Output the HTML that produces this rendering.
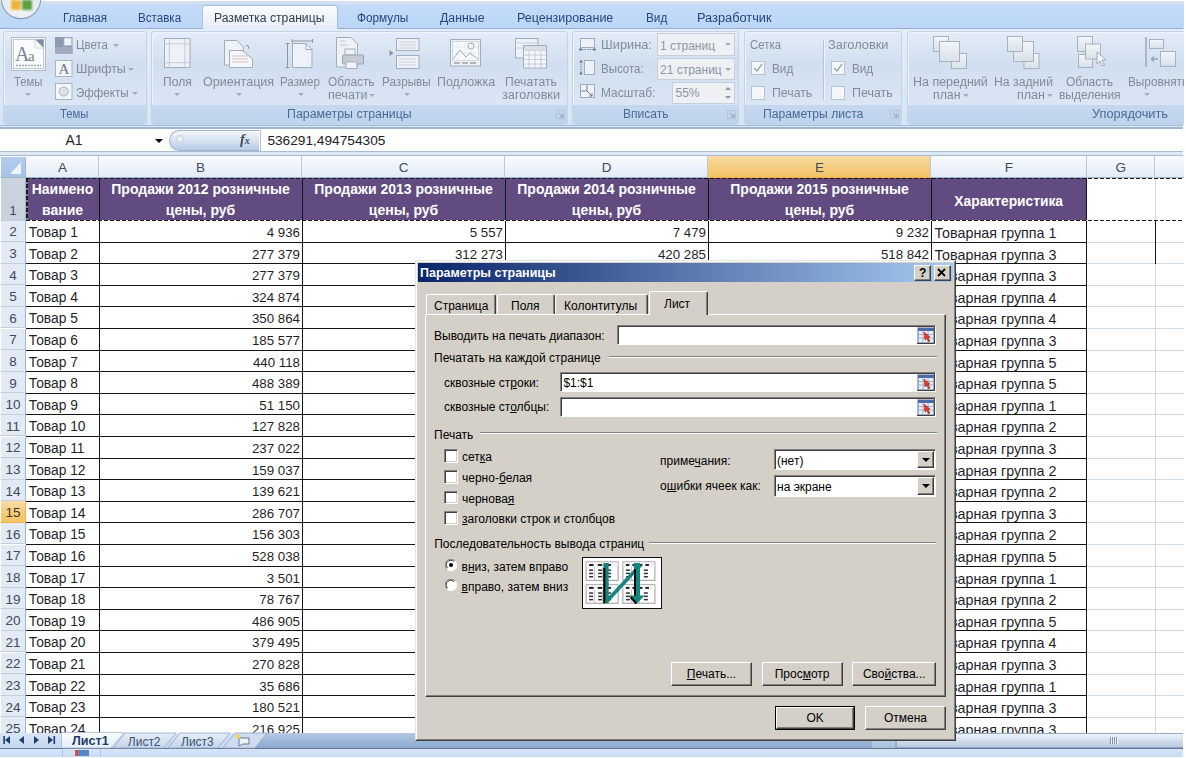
<!DOCTYPE html><html><head><meta charset="utf-8"><style>
*{margin:0;padding:0;box-sizing:border-box}
html,body{width:1186px;height:758px;overflow:hidden;background:#fff;font-family:"Liberation Sans",sans-serif}
.ab{position:absolute}
.t{position:absolute;white-space:pre;line-height:1}
</style></head><body>
<div class="ab" style="left:0;top:0;width:1186px;height:29px;background:linear-gradient(#fff 0,#fff 1px,#d3e0ef 1px,#d3e0ef 4px,#c4dcf9 4px,#bcd6f7 28px)"></div>
<div class="ab" style="left:0;top:28px;width:1183px;height:1px;background:#94acd0"></div>
<div class="ab" style="left:2px;top:-20px;width:38px;height:38px;border-radius:50%;background:radial-gradient(circle at 50% 70%,#f7f9fc 0,#e4eaf1 55%,#b9c3cf 100%);box-shadow:0 0 0 1.2px #8e9aaa"></div>
<div class="ab" style="left:11px;top:0px;width:9.5px;height:10px;background:#eeb43a;border-radius:1px;filter:blur(0.8px)"></div>
<div class="ab" style="left:21.5px;top:0px;width:10px;height:10px;background:#5aa043;border-radius:1px;filter:blur(0.8px)"></div>
<div class="ab" style="left:202px;top:5px;width:136px;height:24px;border:1px solid #a9c1e0;border-bottom:none;border-radius:3px 3px 0 0;background:linear-gradient(#fbfdff,#e4ecf7)"></div>
<div class="t" style="left:62.9px;top:11.6px;font-size:12px;color:#24477e;transform-origin:0 0;transform:scaleX(0.963)">Главная</div>
<div class="t" style="left:137.7px;top:11.6px;font-size:12px;color:#24477e;transform-origin:0 0;transform:scaleX(0.966)">Вставка</div>
<div class="t" style="left:213.5px;top:11.6px;font-size:12px;color:#333c4a;transform-origin:0 0;transform:scaleX(1.014)">Разметка страницы</div>
<div class="t" style="left:356.7px;top:11.6px;font-size:12px;color:#24477e;transform-origin:0 0;transform:scaleX(0.982)">Формулы</div>
<div class="t" style="left:440.4px;top:11.6px;font-size:12px;color:#24477e;transform-origin:0 0;transform:scaleX(1.027)">Данные</div>
<div class="t" style="left:516.7px;top:11.6px;font-size:12px;color:#24477e;transform-origin:0 0;transform:scaleX(1.039)">Рецензирование</div>
<div class="t" style="left:645.6px;top:11.6px;font-size:12px;color:#24477e;transform-origin:0 0;transform:scaleX(0.981)">Вид</div>
<div class="t" style="left:697.4px;top:11.6px;font-size:12px;color:#24477e;transform-origin:0 0;transform:scaleX(1.066)">Разработчик</div>
<div class="ab" style="left:0;top:29px;width:1183px;height:99px;background:linear-gradient(#e4eef9,#dbe8f6 60%,#d6e5f5)"></div>
<div class="ab" style="left:0;top:125px;width:1183px;height:1px;background:#a8bdd8"></div>
<div class="ab" style="left:0;top:127px;width:1183px;height:2px;background:#9fb5d2"></div>
<div class="ab" style="left:2.8px;top:30.5px;width:143.79999999999998px;height:94px;border:1px solid #c3d3e6;border-radius:3px;box-shadow:inset 1px 1px 0 #eef4fb;background:linear-gradient(#e4edf8 0,#dbe6f4 15%,#d0dff0 35%,#d8e4f3 70%,#dce7f5 80%)"></div>
<div class="ab" style="left:3.8px;top:105px;width:141.79999999999998px;height:18.5px;background:linear-gradient(#c5d8ef,#bed3ec);border-radius:0 0 3px 3px"></div>
<div class="ab" style="left:150.8px;top:30.5px;width:416.99999999999994px;height:94px;border:1px solid #c3d3e6;border-radius:3px;box-shadow:inset 1px 1px 0 #eef4fb;background:linear-gradient(#e4edf8 0,#dbe6f4 15%,#d0dff0 35%,#d8e4f3 70%,#dce7f5 80%)"></div>
<div class="ab" style="left:151.8px;top:105px;width:414.99999999999994px;height:18.5px;background:linear-gradient(#c5d8ef,#bed3ec);border-radius:0 0 3px 3px"></div>
<div class="ab" style="left:572.3px;top:30.5px;width:166.70000000000005px;height:94px;border:1px solid #c3d3e6;border-radius:3px;box-shadow:inset 1px 1px 0 #eef4fb;background:linear-gradient(#e4edf8 0,#dbe6f4 15%,#d0dff0 35%,#d8e4f3 70%,#dce7f5 80%)"></div>
<div class="ab" style="left:573.3px;top:105px;width:164.70000000000005px;height:18.5px;background:linear-gradient(#c5d8ef,#bed3ec);border-radius:0 0 3px 3px"></div>
<div class="ab" style="left:743.9px;top:30.5px;width:158.5px;height:94px;border:1px solid #c3d3e6;border-radius:3px;box-shadow:inset 1px 1px 0 #eef4fb;background:linear-gradient(#e4edf8 0,#dbe6f4 15%,#d0dff0 35%,#d8e4f3 70%,#dce7f5 80%)"></div>
<div class="ab" style="left:744.9px;top:105px;width:156.5px;height:18.5px;background:linear-gradient(#c5d8ef,#bed3ec);border-radius:0 0 3px 3px"></div>
<div class="ab" style="left:907.2px;top:30.5px;width:292.79999999999995px;height:94px;border:1px solid #c3d3e6;border-radius:3px;box-shadow:inset 1px 1px 0 #eef4fb;background:linear-gradient(#e4edf8 0,#dbe6f4 15%,#d0dff0 35%,#d8e4f3 70%,#dce7f5 80%)"></div>
<div class="ab" style="left:908.2px;top:105px;width:290.79999999999995px;height:18.5px;background:linear-gradient(#c5d8ef,#bed3ec);border-radius:0 0 3px 3px"></div>
<div class="t" style="left:13.9px;top:75.84px;font-size:12px;color:#828b97;transform-origin:0 0;transform:scaleX(0.937)">Темы</div>
<div class="ab" style="left:25px;top:93px;width:0;height:0;border-left:3px solid transparent;border-right:3px solid transparent;border-top:3px solid #a3adb8"></div>
<div class="t" style="left:75.5px;top:39.34px;font-size:12px;color:#828b97;transform-origin:0 0;transform:scaleX(0.951)">Цвета</div>
<div class="ab" style="left:113px;top:44px;width:0;height:0;border-left:3px solid transparent;border-right:3px solid transparent;border-top:3px solid #a3adb8"></div>
<div class="t" style="left:75.5px;top:63.34px;font-size:12px;color:#828b97;transform-origin:0 0;transform:scaleX(1.035)">Шрифты</div>
<div class="ab" style="left:128px;top:68px;width:0;height:0;border-left:3px solid transparent;border-right:3px solid transparent;border-top:3px solid #a3adb8"></div>
<div class="t" style="left:75.5px;top:87.14px;font-size:12px;color:#828b97;transform-origin:0 0;transform:scaleX(0.964)">Эффекты</div>
<div class="ab" style="left:132px;top:92px;width:0;height:0;border-left:3px solid transparent;border-right:3px solid transparent;border-top:3px solid #a3adb8"></div>
<div class="t" style="left:162.6px;top:75.84px;font-size:12px;color:#828b97;transform-origin:0 0;transform:scaleX(1.009)">Поля</div>
<div class="ab" style="left:174px;top:93px;width:0;height:0;border-left:3px solid transparent;border-right:3px solid transparent;border-top:3px solid #a3adb8"></div>
<div class="t" style="left:202.9px;top:75.84px;font-size:12px;color:#828b97;transform-origin:0 0;transform:scaleX(1.044)">Ориентация</div>
<div class="ab" style="left:235.5px;top:93px;width:0;height:0;border-left:3px solid transparent;border-right:3px solid transparent;border-top:3px solid #a3adb8"></div>
<div class="t" style="left:280.4px;top:75.84px;font-size:12px;color:#828b97;transform-origin:0 0;transform:scaleX(0.967)">Размер</div>
<div class="ab" style="left:297.5px;top:93px;width:0;height:0;border-left:3px solid transparent;border-right:3px solid transparent;border-top:3px solid #a3adb8"></div>
<div class="t" style="left:328.3px;top:75.84px;font-size:12px;color:#828b97;transform-origin:0 0;transform:scaleX(0.987)">Область</div>
<div class="t" style="left:327.7px;top:89.44px;font-size:12px;color:#828b97;transform-origin:0 0;transform:scaleX(1.047)">печати</div>
<div class="ab" style="left:369px;top:94px;width:0;height:0;border-left:3px solid transparent;border-right:3px solid transparent;border-top:3px solid #a3adb8"></div>
<div class="t" style="left:382px;top:75.84px;font-size:12px;color:#828b97;transform-origin:0 0;transform:scaleX(0.975)">Разрывы</div>
<div class="ab" style="left:403.5px;top:93px;width:0;height:0;border-left:3px solid transparent;border-right:3px solid transparent;border-top:3px solid #a3adb8"></div>
<div class="t" style="left:437.3px;top:75.84px;font-size:12px;color:#828b97;transform-origin:0 0;transform:scaleX(1.039)">Подложка</div>
<div class="t" style="left:505px;top:75.84px;font-size:12px;color:#828b97;transform-origin:0 0;transform:scaleX(1.014)">Печатать</div>
<div class="t" style="left:502px;top:89.44px;font-size:12px;color:#828b97;transform-origin:0 0;transform:scaleX(1.058)">заголовки</div>
<div class="t" style="left:601.4px;top:39.34px;font-size:12px;color:#828b97;transform-origin:0 0;transform:scaleX(1.067)">Ширина:</div>
<div class="t" style="left:601.4px;top:62.84px;font-size:12px;color:#828b97;transform-origin:0 0;transform:scaleX(0.959)">Высота:</div>
<div class="t" style="left:601.4px;top:86.84px;font-size:12px;color:#828b97;transform-origin:0 0;transform:scaleX(0.993)">Масштаб:</div>
<div class="t" style="left:749.7px;top:39.34px;font-size:12px;color:#828b97;transform-origin:0 0;transform:scaleX(0.953)">Сетка</div>
<div class="t" style="left:772px;top:63.34px;font-size:12px;color:#828b97;transform-origin:0 0;transform:scaleX(0.981)">Вид</div>
<div class="t" style="left:772px;top:87.34px;font-size:12px;color:#828b97;transform-origin:0 0;transform:scaleX(1.023)">Печать</div>
<div class="t" style="left:828.2px;top:39.34px;font-size:12px;color:#828b97;transform-origin:0 0;transform:scaleX(1.069)">Заголовки</div>
<div class="t" style="left:851.5px;top:63.34px;font-size:12px;color:#828b97;transform-origin:0 0;transform:scaleX(0.977)">Вид</div>
<div class="t" style="left:851.5px;top:87.34px;font-size:12px;color:#828b97;transform-origin:0 0;transform:scaleX(1.035)">Печать</div>
<div class="t" style="left:913.3px;top:75.84px;font-size:12px;color:#828b97;transform-origin:0 0;transform:scaleX(1.038)">На передний</div>
<div class="t" style="left:932.5px;top:89.44px;font-size:12px;color:#828b97;transform-origin:0 0;transform:scaleX(1.026)">план</div>
<div class="ab" style="left:963px;top:94px;width:0;height:0;border-left:3px solid transparent;border-right:3px solid transparent;border-top:3px solid #a3adb8"></div>
<div class="t" style="left:994px;top:75.84px;font-size:12px;color:#828b97;transform-origin:0 0;transform:scaleX(1.019)">На задний</div>
<div class="t" style="left:1017px;top:89.44px;font-size:12px;color:#828b97;transform-origin:0 0;transform:scaleX(1.045)">план</div>
<div class="ab" style="left:1047px;top:94px;width:0;height:0;border-left:3px solid transparent;border-right:3px solid transparent;border-top:3px solid #a3adb8"></div>
<div class="t" style="left:1066.4px;top:75.84px;font-size:12px;color:#828b97;transform-origin:0 0;transform:scaleX(0.998)">Область</div>
<div class="t" style="left:1059px;top:89.44px;font-size:12px;color:#828b97;transform-origin:0 0;transform:scaleX(0.997)">выделения</div>
<div class="t" style="left:1127.9px;top:75.84px;font-size:12px;color:#828b97;transform-origin:0 0;transform:scaleX(0.982)">Выровнять</div>
<div class="ab" style="left:1144px;top:93px;width:0;height:0;border-left:3px solid transparent;border-right:3px solid transparent;border-top:3px solid #a3adb8"></div>
<div class="t" style="left:60.2px;top:108.04px;font-size:12px;color:#4a6a9a;transform-origin:0 0;transform:scaleX(0.940)">Темы</div>
<div class="t" style="left:286.7px;top:108.04px;font-size:12px;color:#4a6a9a;transform-origin:0 0;transform:scaleX(1.031)">Параметры страницы</div>
<div class="t" style="left:623.2px;top:108.04px;font-size:12px;color:#4a6a9a;transform-origin:0 0;transform:scaleX(1.005)">Вписать</div>
<div class="t" style="left:762.8px;top:108.04px;font-size:12px;color:#4a6a9a;transform-origin:0 0;transform:scaleX(1.013)">Параметры листа</div>
<div class="t" style="left:1091.7px;top:108.04px;font-size:12px;color:#4a6a9a;transform-origin:0 0;transform:scaleX(1.064)">Упорядочить</div>
<div class="ab" style="left:1183.5px;top:0;width:3px;height:758px;background:#fff;z-index:50"></div>
<defs></defs>
<svg class="ab" style="left:11px;top:36.8px;overflow:visible" width="35" height="34" viewBox="0 0 35 34"><rect x="0.5" y="0.5" width="34" height="33" fill="#f4f6f9" stroke="#b4bcc6"/><rect x="2.5" y="2.5" width="30" height="29" fill="#fbfcfd" stroke="#c2c8d0"/><path d="M24 2.5H32.5V11Z" fill="#7f8fa6"/><path d="M24 2.5V11H32.5" fill="#fff" stroke="#b4bcc6" stroke-width="0.6"/><text x="4" y="24" font-family="Liberation Serif" font-size="20" fill="#7b8390">A</text><text x="17" y="24" font-family="Liberation Serif" font-size="15" fill="#7b8390">a</text><path d="M5 28.5H30" stroke="#9aa3ae" stroke-width="1.5" stroke-dasharray="2 1"/></svg>
<svg class="ab" style="left:54.7px;top:36.8px;overflow:visible" width="17.5" height="17" viewBox="0 0 17.5 17"><rect x="0" y="0" width="17.5" height="17" fill="#8c9bb0"/><rect x="9" y="1" width="7.5" height="7.5" fill="#eef2f7" stroke="#b8c2ce" stroke-width="0.8"/><rect x="0" y="10" width="17.5" height="7" fill="#a1aec0"/></svg>
<svg class="ab" style="left:54.7px;top:59.5px;overflow:visible" width="17.5" height="17" viewBox="0 0 17.5 17"><rect x="0.5" y="0.5" width="16.5" height="16" fill="#f2f5f9" stroke="#aab3be"/><text x="3.5" y="14" font-family="Liberation Serif" font-size="15" fill="#6f7884">A</text></svg>
<svg class="ab" style="left:54.7px;top:83px;overflow:visible" width="17.5" height="17" viewBox="0 0 17.5 17"><rect x="0.5" y="0.5" width="16.5" height="16" fill="#f2f5f9" stroke="#aab3be"/><circle cx="8.75" cy="8.5" r="4.5" fill="#dde3ea" stroke="#a9b2bd"/></svg>
<svg class="ab" style="left:164.4px;top:37.9px;overflow:visible" width="26.5" height="30" viewBox="0 0 26.5 30"><rect x="0.5" y="0.5" width="25.5" height="29" fill="#eef2f8" stroke="#a3adba"/><path d="M5.3 0.5V29.5M20.8 0.5V29.5M0.5 5.8H26M0.5 24.7H26" stroke="#b9c2cd" stroke-width="0.8"/></svg>
<svg class="ab" style="left:224px;top:39.5px;overflow:visible" width="30" height="29" viewBox="0 0 30 29"><path d="M0.5 0.5H13L19.5 7V25H0.5Z" fill="#eef2f8" stroke="#a3adba"/><path d="M5.5 10.5H18.5L28.5 19V27.5H5.5Z" fill="#f5f7fa" stroke="#a3adba"/><path d="M8 16H24M8 19H24M8 22H24" stroke="#c8a8a8" stroke-width="0.7"/><path d="M22 5Q25 5 25 9" stroke="#8993a0" fill="none"/></svg>
<svg class="ab" style="left:285px;top:39.5px;overflow:visible" width="29" height="29" viewBox="0 0 29 29"><path d="M2.5 3V27.5M0.5 3.5H4.5M0.5 27.5H4.5" stroke="#8d97a3"/><path d="M7 1H27.5M7 -1V3M27.5 -1V3" stroke="#8d97a3"/><path d="M7.5 3.5H21L27 9.5V27.5H7.5Z" fill="#eef2f8" stroke="#a3adba"/><path d="M21 3.5V9.5H27" fill="none" stroke="#a3adba"/></svg>
<svg class="ab" style="left:336.4px;top:37.2px;overflow:visible" width="28" height="32.5" viewBox="0 0 28 32.5"><path d="M0.5 0.5H15L21.5 7V30H0.5Z" fill="#eef2f8" stroke="#a3adba"/><path d="M4 4H10M4 8H12" stroke="#c3cad3"/><rect x="9" y="12" width="10" height="6" fill="#eef1f5" stroke="#a3adba"/><rect x="6.5" y="18" width="21" height="9" rx="1" fill="#c5ccd6" stroke="#98a2ae"/><rect x="10" y="25" width="11" height="6.5" fill="#f2f4f7" stroke="#a3adba"/></svg>
<svg class="ab" style="left:389px;top:38px;overflow:visible" width="31" height="32" viewBox="0 0 31 32"><rect x="7.5" y="0.5" width="22.5" height="12" fill="#eef2f8" stroke="#a3adba"/><path d="M10 4H27M10 7H27M10 10H27" stroke="#c3cad3" stroke-width="0.8"/><rect x="7.5" y="17.5" width="22.5" height="13" fill="#eef2f8" stroke="#a3adba"/><path d="M10 21H27M10 24H27M10 27H27" stroke="#c3cad3" stroke-width="0.8"/><path d="M0.5 12L4.5 15L0.5 18Z" fill="#8a94a0"/></svg>
<svg class="ab" style="left:449.5px;top:39px;overflow:visible" width="31" height="28" viewBox="0 0 31 28"><rect x="0.5" y="0.5" width="30" height="26.5" fill="#eef2f7" stroke="#a3adba"/><rect x="2.5" y="2.5" width="26" height="19" fill="#f7f9fb" stroke="#c4cbd4" stroke-width="0.7"/><path d="M2.5 8H28.5M2.5 14H28.5M8 2.5V21.5M15 2.5V21.5M22 2.5V21.5" stroke="#dfe4ea" stroke-width="0.6"/><circle cx="21" cy="7" r="3" fill="none" stroke="#a3adba"/><path d="M3 20L10 11L16 18L20 14L28 20" fill="none" stroke="#a3adba"/><path d="M4 24H10M12 24H18M20 24H26" stroke="#9aa3ae" stroke-width="1.5"/></svg>
<svg class="ab" style="left:514.5px;top:38px;overflow:visible" width="32" height="31" viewBox="0 0 32 31"><rect x="0.5" y="0.5" width="22.5" height="19.5" fill="#eef2f8" stroke="#a3adba"/><path d="M0.5 5H23M0.5 10H23" stroke="#b9c2cd" stroke-width="0.8"/><rect x="8.5" y="7.5" width="23" height="22.5" fill="#f5f7fa" stroke="#a3adba"/><path d="M8.5 12.5H31.5M8.5 17H31.5M8.5 21.5H31.5M8.5 26H31.5M14 12.5V30M20 12.5V30M26 12.5V30" stroke="#b9c2cd" stroke-width="0.8"/><rect x="9" y="8" width="22" height="4.5" fill="#d7dee8"/></svg>
<svg class="ab" style="left:556px;top:110px;overflow:visible" width="9" height="9" viewBox="0 0 9 9"><rect x="0.5" y="0.5" width="8" height="8" fill="none" stroke="#b5c3d4"/><path d="M3 3L7 7M7 4V7H4" stroke="#8fa0b5" fill="none"/></svg>
<svg class="ab" style="left:727px;top:110px;overflow:visible" width="9" height="9" viewBox="0 0 9 9"><rect x="0.5" y="0.5" width="8" height="8" fill="none" stroke="#b5c3d4"/><path d="M3 3L7 7M7 4V7H4" stroke="#8fa0b5" fill="none"/></svg>
<svg class="ab" style="left:890px;top:110px;overflow:visible" width="9" height="9" viewBox="0 0 9 9"><rect x="0.5" y="0.5" width="8" height="8" fill="none" stroke="#b5c3d4"/><path d="M3 3L7 7M7 4V7H4" stroke="#8fa0b5" fill="none"/></svg>
<svg class="ab" style="left:578.9px;top:38.3px;overflow:visible" width="17" height="13.5" viewBox="0 0 17 13.5"><rect x="1.5" y="0.5" width="14" height="9" fill="#eef2f7" stroke="#a3adba"/><path d="M0.5 11.5H16.5" stroke="#7e8896" stroke-dasharray="1.5 1"/><circle cx="1.5" cy="11.5" r="1.3" fill="#6e7885"/><circle cx="15.5" cy="11.5" r="1.3" fill="#6e7885"/></svg>
<svg class="ab" style="left:578.9px;top:60px;overflow:visible" width="17" height="15" viewBox="0 0 17 15"><rect x="5.5" y="0.5" width="10" height="14" fill="#eef2f7" stroke="#a3adba"/><path d="M2 1V14" stroke="#7e8896" stroke-dasharray="1.5 1"/><circle cx="2" cy="1.5" r="1.3" fill="#6e7885"/><circle cx="2" cy="13.5" r="1.3" fill="#6e7885"/></svg>
<svg class="ab" style="left:580px;top:83.5px;overflow:visible" width="15" height="14" viewBox="0 0 15 14"><rect x="0.5" y="0.5" width="14" height="13" fill="#eef2f7" stroke="#a3adba"/><path d="M0.5 7H7V0.5" stroke="#7e8896" fill="none"/><path d="M7 7L12 12M12 9V12H9" stroke="#6e7885" fill="none"/></svg>
<div class="ab" style="left:657px;top:33.2px;width:78.3px;height:22.799999999999997px;background:#eef0f3;border:1px solid #c6d0dc"></div>
<div class="t" style="left:660px;top:40px;font-size:12px;color:#8d97a3;width:62px;overflow:hidden">1 страниц</div>
<div class="ab" style="left:725px;top:43.2px;width:0;height:0;border-left:3px solid transparent;border-right:3px solid transparent;border-top:3px solid #a3adb8"></div>
<div class="ab" style="left:657px;top:57.5px;width:78.3px;height:22.900000000000006px;background:#eef0f3;border:1px solid #c6d0dc"></div>
<div class="t" style="left:660px;top:64.4px;font-size:12px;color:#8d97a3;width:62px;overflow:hidden">21 страниц</div>
<div class="ab" style="left:725px;top:67.5px;width:0;height:0;border-left:3px solid transparent;border-right:3px solid transparent;border-top:3px solid #a3adb8"></div>
<div class="ab" style="left:671.8px;top:81.9px;width:63.5px;height:22.1px;background:#eef0f3;border:1px solid #c6d0dc"></div>
<div class="t" style="left:675.5px;top:86.5px;font-size:12px;color:#8d97a3">55%</div>
<div class="ab" style="left:725px;top:87px;width:0;height:0;border-left:3px solid transparent;border-right:3px solid transparent;border-bottom:3px solid #8d97a3"></div>
<div class="ab" style="left:725px;top:96px;width:0;height:0;border-left:3px solid transparent;border-right:3px solid transparent;border-top:3px solid #8d97a3"></div>
<svg class="ab" style="left:751.2px;top:61.4px;overflow:visible" width="14" height="14" viewBox="0 0 14 14"><rect x="0.5" y="0.5" width="13" height="13" fill="#f4f6f9" stroke="#b9c3cf"/><path d="M3 7L6 10L11 3" fill="none" stroke="#9aa4b0" stroke-width="1.3"/></svg>
<svg class="ab" style="left:751.2px;top:86px;overflow:visible" width="14" height="14" viewBox="0 0 14 14"><rect x="0.5" y="0.5" width="13" height="13" fill="#f4f6f9" stroke="#b9c3cf"/></svg>
<svg class="ab" style="left:831px;top:61.4px;overflow:visible" width="14" height="14" viewBox="0 0 14 14"><rect x="0.5" y="0.5" width="13" height="13" fill="#f4f6f9" stroke="#b9c3cf"/><path d="M3 7L6 10L11 3" fill="none" stroke="#9aa4b0" stroke-width="1.3"/></svg>
<svg class="ab" style="left:831px;top:86px;overflow:visible" width="14" height="14" viewBox="0 0 14 14"><rect x="0.5" y="0.5" width="13" height="13" fill="#f4f6f9" stroke="#b9c3cf"/></svg>
<div class="ab" style="left:823px;top:40px;width:1px;height:60px;background:#b6c6da;box-shadow:1px 0 0 #eef4fb"></div>
<svg class="ab" style="left:933px;top:36px;overflow:visible" width="34" height="33" viewBox="0 0 34 33"><defs><linearGradient id="gsq" x1="0" y1="0" x2="0" y2="1"><stop offset="0" stop-color="#f3f6fa"/><stop offset="1" stop-color="#d9e0e9"/></linearGradient></defs><rect x="0.5" y="0.5" width="15" height="15" fill="url(#gsq)" stroke="#a8b2be"/><rect x="6.5" y="5.5" width="20" height="20" fill="url(#gsq)" stroke="#a8b2be"/><rect x="18.5" y="17.5" width="15" height="15" fill="url(#gsq)" stroke="#a8b2be"/><rect x="6.5" y="5.5" width="20" height="20" fill="url(#gsq)" stroke="#a8b2be"/></svg>
<svg class="ab" style="left:1006.5px;top:36px;overflow:visible" width="34" height="33" viewBox="0 0 34 33"><rect x="17" y="17.5" width="15" height="15" fill="url(#gsq)" stroke="#a8b2be"/><rect x="6.5" y="5.5" width="20" height="20" fill="url(#gsq)" stroke="#a8b2be"/><rect x="0.5" y="0.5" width="15" height="15" fill="url(#gsq)" stroke="#a8b2be"/></svg>
<svg class="ab" style="left:1076.5px;top:36px;overflow:visible" width="30" height="33" viewBox="0 0 30 33"><rect x="1.5" y="18.5" width="14" height="13" fill="url(#gsq)" stroke="#a8b2be"/><rect x="0.5" y="0.5" width="15" height="15" fill="url(#gsq)" stroke="#a8b2be"/><rect x="8.5" y="8" width="15" height="15" fill="url(#gsq)" stroke="#a8b2be"/><path d="M20 16V28L23 25L25.5 30L27.5 29L25 24H29Z" fill="#f7f9fb" stroke="#8f99a5" stroke-width="0.8"/></svg>
<svg class="ab" style="left:1144.5px;top:36px;overflow:visible" width="32" height="33" viewBox="0 0 32 33"><path d="M1 1V31" stroke="#9aa4b0" stroke-width="1.4"/><rect x="4.5" y="3.5" width="14" height="9" fill="url(#gsq)" stroke="#a8b2be"/><rect x="15.5" y="15.5" width="15" height="15" fill="url(#gsq)" stroke="#a8b2be"/><path d="M13 23H7M9 20.5L6.5 23L9 25.5" stroke="#9aa4b0" stroke-width="1.3" fill="none"/></svg>
<div class="ab" style="left:0;top:129px;width:1183px;height:22px;background:#fff"></div>
<div class="ab" style="left:0;top:151px;width:1183px;height:5px;background:linear-gradient(#a9bdd6 0,#a9bdd6 1px,#dfe9f5 1px,#dfe9f5 4px,#a5b9d2 4px)"></div>
<div class="t" style="left:65.5px;top:134px;font-size:13.9px;color:#222">A1</div>
<div class="ab" style="left:155px;top:138.5px;width:0;height:0;border-left:4px solid transparent;border-right:4px solid transparent;border-top:4px solid #000"></div>
<div class="ab" style="left:169px;top:129.5px;width:90px;height:21.5px;border-radius:11px 0 0 11px;border:1px solid #9fb2c8;border-right:none;background:linear-gradient(#f4f7fb,#d8e4f2 45%,#b7cbe4)"></div>
<div class="ab" style="left:176px;top:135px;width:8px;height:8px;border-radius:50%;background:radial-gradient(#fff,#c9d3de 70%,#aab6c4)"></div>
<div class="t" style="left:240px;top:133px;font-size:14px;font-family:'Liberation Serif',serif;font-style:italic;font-weight:bold;color:#3b4a5e">f<span style="font-size:10px">x</span></div>
<div class="ab" style="left:259.5px;top:129.5px;width:1px;height:21.5px;background:#aebfd4"></div>
<div class="t" style="left:267.4px;top:134px;font-size:13.69px;color:#222">536291,494754305</div>
<div class="ab" style="left:0;top:156.5px;width:26px;height:21px;background:linear-gradient(#b3cdec,#a4c1e6);border-left:1px solid #fff;border-right:1px solid #9eb6ce;border-bottom:1px solid #9eb6ce"></div>
<div class="ab" style="left:9.5px;top:161.5px;width:0;height:0;border-left:11px solid transparent;border-bottom:12px solid #eef4fb;"></div>
<div class="ab" style="left:26px;top:156px;width:73px;height:21.5px;background:linear-gradient(#f9fbfd,#e4ecf7);border-right:1px solid #b8c9dc;border-bottom:1px solid #9eb6ce"></div>
<div class="t" style="left:62.5px;top:160.5px;font-size:13.5px;color:#3e4b5b;transform:translateX(-50%)">A</div>
<div class="ab" style="left:99px;top:156px;width:203px;height:21.5px;background:linear-gradient(#f9fbfd,#e4ecf7);border-right:1px solid #b8c9dc;border-bottom:1px solid #9eb6ce"></div>
<div class="t" style="left:200.5px;top:160.5px;font-size:13.5px;color:#3e4b5b;transform:translateX(-50%)">B</div>
<div class="ab" style="left:302px;top:156px;width:203px;height:21.5px;background:linear-gradient(#f9fbfd,#e4ecf7);border-right:1px solid #b8c9dc;border-bottom:1px solid #9eb6ce"></div>
<div class="t" style="left:403.5px;top:160.5px;font-size:13.5px;color:#3e4b5b;transform:translateX(-50%)">C</div>
<div class="ab" style="left:505px;top:156px;width:203px;height:21.5px;background:linear-gradient(#f9fbfd,#e4ecf7);border-right:1px solid #b8c9dc;border-bottom:1px solid #9eb6ce"></div>
<div class="t" style="left:606.5px;top:160.5px;font-size:13.5px;color:#3e4b5b;transform:translateX(-50%)">D</div>
<div class="ab" style="left:708px;top:156px;width:223px;height:21.5px;background:linear-gradient(#f9dba4,#f2c262);border-right:1px solid #b8c9dc;border-bottom:1px solid #f2b24f"></div>
<div class="t" style="left:819.5px;top:160.5px;font-size:13.5px;color:#3e4b5b;transform:translateX(-50%)">E</div>
<div class="ab" style="left:931px;top:156px;width:155.5px;height:21.5px;background:linear-gradient(#f9fbfd,#e4ecf7);border-right:1px solid #b8c9dc;border-bottom:1px solid #9eb6ce"></div>
<div class="t" style="left:1008.75px;top:160.5px;font-size:13.5px;color:#3e4b5b;transform:translateX(-50%)">F</div>
<div class="ab" style="left:1086.5px;top:156px;width:68.70000000000005px;height:21.5px;background:linear-gradient(#f9fbfd,#e4ecf7);border-right:1px solid #b8c9dc;border-bottom:1px solid #9eb6ce"></div>
<div class="t" style="left:1120.85px;top:160.5px;font-size:13.5px;color:#3e4b5b;transform:translateX(-50%)">G</div>
<div class="ab" style="left:1155.2px;top:156px;width:74.79999999999995px;height:21.5px;background:linear-gradient(#f9fbfd,#e4ecf7);border-right:1px solid #b8c9dc;border-bottom:1px solid #9eb6ce"></div>
<div class="t" style="left:1192.6px;top:160.5px;font-size:13.5px;color:#3e4b5b;transform:translateX(-50%)">H</div>
<div class="ab" style="left:0;top:177.5px;width:26px;height:43.0px;background:#c9d2dd;border-left:1px solid #fff;border-right:1px solid #9eb6ce;border-bottom:1px solid #c2cfdf"></div>
<div class="t" style="left:13px;top:203.7px;font-size:13.5px;color:#3e4b5b;transform:translateX(-50%)">1</div>
<div class="ab" style="left:0;top:220.5px;width:26px;height:21.599999999999994px;background:#e1eaf5;border-left:1px solid #fff;border-right:1px solid #9eb6ce;border-bottom:1px solid #c2cfdf"></div>
<div class="t" style="left:13px;top:225.29999999999998px;font-size:13.5px;color:#3e4b5b;transform:translateX(-50%)">2</div>
<div class="ab" style="left:0;top:242.1px;width:26px;height:21.599999999999994px;background:#e1eaf5;border-left:1px solid #fff;border-right:1px solid #9eb6ce;border-bottom:1px solid #c2cfdf"></div>
<div class="t" style="left:13px;top:246.89999999999998px;font-size:13.5px;color:#3e4b5b;transform:translateX(-50%)">3</div>
<div class="ab" style="left:0;top:263.7px;width:26px;height:21.600000000000023px;background:#e1eaf5;border-left:1px solid #fff;border-right:1px solid #9eb6ce;border-bottom:1px solid #c2cfdf"></div>
<div class="t" style="left:13px;top:268.5px;font-size:13.5px;color:#3e4b5b;transform:translateX(-50%)">4</div>
<div class="ab" style="left:0;top:285.3px;width:26px;height:21.599999999999966px;background:#e1eaf5;border-left:1px solid #fff;border-right:1px solid #9eb6ce;border-bottom:1px solid #c2cfdf"></div>
<div class="t" style="left:13px;top:290.09999999999997px;font-size:13.5px;color:#3e4b5b;transform:translateX(-50%)">5</div>
<div class="ab" style="left:0;top:306.9px;width:26px;height:21.600000000000023px;background:#e1eaf5;border-left:1px solid #fff;border-right:1px solid #9eb6ce;border-bottom:1px solid #c2cfdf"></div>
<div class="t" style="left:13px;top:311.7px;font-size:13.5px;color:#3e4b5b;transform:translateX(-50%)">6</div>
<div class="ab" style="left:0;top:328.5px;width:26px;height:21.600000000000023px;background:#e1eaf5;border-left:1px solid #fff;border-right:1px solid #9eb6ce;border-bottom:1px solid #c2cfdf"></div>
<div class="t" style="left:13px;top:333.3px;font-size:13.5px;color:#3e4b5b;transform:translateX(-50%)">7</div>
<div class="ab" style="left:0;top:350.1px;width:26px;height:21.600000000000023px;background:#e1eaf5;border-left:1px solid #fff;border-right:1px solid #9eb6ce;border-bottom:1px solid #c2cfdf"></div>
<div class="t" style="left:13px;top:354.90000000000003px;font-size:13.5px;color:#3e4b5b;transform:translateX(-50%)">8</div>
<div class="ab" style="left:0;top:371.70000000000005px;width:26px;height:21.599999999999966px;background:#e1eaf5;border-left:1px solid #fff;border-right:1px solid #9eb6ce;border-bottom:1px solid #c2cfdf"></div>
<div class="t" style="left:13px;top:376.5px;font-size:13.5px;color:#3e4b5b;transform:translateX(-50%)">9</div>
<div class="ab" style="left:0;top:393.3px;width:26px;height:21.599999999999966px;background:#e1eaf5;border-left:1px solid #fff;border-right:1px solid #9eb6ce;border-bottom:1px solid #c2cfdf"></div>
<div class="t" style="left:13px;top:398.09999999999997px;font-size:13.5px;color:#3e4b5b;transform:translateX(-50%)">10</div>
<div class="ab" style="left:0;top:414.9px;width:26px;height:21.600000000000023px;background:#e1eaf5;border-left:1px solid #fff;border-right:1px solid #9eb6ce;border-bottom:1px solid #c2cfdf"></div>
<div class="t" style="left:13px;top:419.7px;font-size:13.5px;color:#3e4b5b;transform:translateX(-50%)">11</div>
<div class="ab" style="left:0;top:436.5px;width:26px;height:21.600000000000023px;background:#e1eaf5;border-left:1px solid #fff;border-right:1px solid #9eb6ce;border-bottom:1px solid #c2cfdf"></div>
<div class="t" style="left:13px;top:441.3px;font-size:13.5px;color:#3e4b5b;transform:translateX(-50%)">12</div>
<div class="ab" style="left:0;top:458.1px;width:26px;height:21.600000000000023px;background:#e1eaf5;border-left:1px solid #fff;border-right:1px solid #9eb6ce;border-bottom:1px solid #c2cfdf"></div>
<div class="t" style="left:13px;top:462.90000000000003px;font-size:13.5px;color:#3e4b5b;transform:translateX(-50%)">13</div>
<div class="ab" style="left:0;top:479.70000000000005px;width:26px;height:21.599999999999966px;background:#e1eaf5;border-left:1px solid #fff;border-right:1px solid #9eb6ce;border-bottom:1px solid #c2cfdf"></div>
<div class="t" style="left:13px;top:484.5px;font-size:13.5px;color:#3e4b5b;transform:translateX(-50%)">14</div>
<div class="ab" style="left:0;top:501.3px;width:26px;height:21.60000000000008px;background:linear-gradient(#f9dba4,#f2c262);border-left:1px solid #fff;border-right:1px solid #f2b24f;border-bottom:1px solid #f2b24f"></div>
<div class="t" style="left:13px;top:506.1000000000001px;font-size:13.5px;color:#3d3a20;transform:translateX(-50%)">15</div>
<div class="ab" style="left:0;top:522.9000000000001px;width:26px;height:21.59999999999991px;background:#e1eaf5;border-left:1px solid #fff;border-right:1px solid #9eb6ce;border-bottom:1px solid #c2cfdf"></div>
<div class="t" style="left:13px;top:527.7px;font-size:13.5px;color:#3e4b5b;transform:translateX(-50%)">16</div>
<div class="ab" style="left:0;top:544.5px;width:26px;height:21.600000000000023px;background:#e1eaf5;border-left:1px solid #fff;border-right:1px solid #9eb6ce;border-bottom:1px solid #c2cfdf"></div>
<div class="t" style="left:13px;top:549.3000000000001px;font-size:13.5px;color:#3e4b5b;transform:translateX(-50%)">17</div>
<div class="ab" style="left:0;top:566.1px;width:26px;height:21.600000000000023px;background:#e1eaf5;border-left:1px solid #fff;border-right:1px solid #9eb6ce;border-bottom:1px solid #c2cfdf"></div>
<div class="t" style="left:13px;top:570.9000000000001px;font-size:13.5px;color:#3e4b5b;transform:translateX(-50%)">18</div>
<div class="ab" style="left:0;top:587.7px;width:26px;height:21.59999999999991px;background:#e1eaf5;border-left:1px solid #fff;border-right:1px solid #9eb6ce;border-bottom:1px solid #c2cfdf"></div>
<div class="t" style="left:13px;top:592.5px;font-size:13.5px;color:#3e4b5b;transform:translateX(-50%)">19</div>
<div class="ab" style="left:0;top:609.3px;width:26px;height:21.600000000000136px;background:#e1eaf5;border-left:1px solid #fff;border-right:1px solid #9eb6ce;border-bottom:1px solid #c2cfdf"></div>
<div class="t" style="left:13px;top:614.1000000000001px;font-size:13.5px;color:#3e4b5b;transform:translateX(-50%)">20</div>
<div class="ab" style="left:0;top:630.9000000000001px;width:26px;height:21.59999999999991px;background:#e1eaf5;border-left:1px solid #fff;border-right:1px solid #9eb6ce;border-bottom:1px solid #c2cfdf"></div>
<div class="t" style="left:13px;top:635.7px;font-size:13.5px;color:#3e4b5b;transform:translateX(-50%)">21</div>
<div class="ab" style="left:0;top:652.5px;width:26px;height:21.600000000000023px;background:#e1eaf5;border-left:1px solid #fff;border-right:1px solid #9eb6ce;border-bottom:1px solid #c2cfdf"></div>
<div class="t" style="left:13px;top:657.3000000000001px;font-size:13.5px;color:#3e4b5b;transform:translateX(-50%)">22</div>
<div class="ab" style="left:0;top:674.1px;width:26px;height:21.600000000000023px;background:#e1eaf5;border-left:1px solid #fff;border-right:1px solid #9eb6ce;border-bottom:1px solid #c2cfdf"></div>
<div class="t" style="left:13px;top:678.9000000000001px;font-size:13.5px;color:#3e4b5b;transform:translateX(-50%)">23</div>
<div class="ab" style="left:0;top:695.7px;width:26px;height:21.59999999999991px;background:#e1eaf5;border-left:1px solid #fff;border-right:1px solid #9eb6ce;border-bottom:1px solid #c2cfdf"></div>
<div class="t" style="left:13px;top:700.5px;font-size:13.5px;color:#3e4b5b;transform:translateX(-50%)">24</div>
<div class="ab" style="left:0;top:717.3px;width:26px;height:21.600000000000136px;background:#e1eaf5;border-left:1px solid #fff;border-right:1px solid #9eb6ce;border-bottom:1px solid #c2cfdf"></div>
<div class="t" style="left:13px;top:722.1000000000001px;font-size:13.5px;color:#3e4b5b;transform:translateX(-50%)">25</div>
<div class="ab" style="left:1086.5px;top:220.0px;width:100px;height:1px;background:#d0d7e5"></div>
<div class="ab" style="left:1086.5px;top:241.6px;width:100px;height:1px;background:#d0d7e5"></div>
<div class="ab" style="left:1086.5px;top:263.2px;width:100px;height:1px;background:#d0d7e5"></div>
<div class="ab" style="left:1086.5px;top:284.8px;width:100px;height:1px;background:#d0d7e5"></div>
<div class="ab" style="left:1086.5px;top:306.4px;width:100px;height:1px;background:#d0d7e5"></div>
<div class="ab" style="left:1086.5px;top:328.0px;width:100px;height:1px;background:#d0d7e5"></div>
<div class="ab" style="left:1086.5px;top:349.6px;width:100px;height:1px;background:#d0d7e5"></div>
<div class="ab" style="left:1086.5px;top:371.20000000000005px;width:100px;height:1px;background:#d0d7e5"></div>
<div class="ab" style="left:1086.5px;top:392.8px;width:100px;height:1px;background:#d0d7e5"></div>
<div class="ab" style="left:1086.5px;top:414.4px;width:100px;height:1px;background:#d0d7e5"></div>
<div class="ab" style="left:1086.5px;top:436.0px;width:100px;height:1px;background:#d0d7e5"></div>
<div class="ab" style="left:1086.5px;top:457.6px;width:100px;height:1px;background:#d0d7e5"></div>
<div class="ab" style="left:1086.5px;top:479.20000000000005px;width:100px;height:1px;background:#d0d7e5"></div>
<div class="ab" style="left:1086.5px;top:500.8px;width:100px;height:1px;background:#d0d7e5"></div>
<div class="ab" style="left:1086.5px;top:522.4000000000001px;width:100px;height:1px;background:#d0d7e5"></div>
<div class="ab" style="left:1086.5px;top:544.0px;width:100px;height:1px;background:#d0d7e5"></div>
<div class="ab" style="left:1086.5px;top:565.6px;width:100px;height:1px;background:#d0d7e5"></div>
<div class="ab" style="left:1086.5px;top:587.2px;width:100px;height:1px;background:#d0d7e5"></div>
<div class="ab" style="left:1086.5px;top:608.8px;width:100px;height:1px;background:#d0d7e5"></div>
<div class="ab" style="left:1086.5px;top:630.4000000000001px;width:100px;height:1px;background:#d0d7e5"></div>
<div class="ab" style="left:1086.5px;top:652.0px;width:100px;height:1px;background:#d0d7e5"></div>
<div class="ab" style="left:1086.5px;top:673.6px;width:100px;height:1px;background:#d0d7e5"></div>
<div class="ab" style="left:1086.5px;top:695.2px;width:100px;height:1px;background:#d0d7e5"></div>
<div class="ab" style="left:1086.5px;top:716.8px;width:100px;height:1px;background:#d0d7e5"></div>
<div class="ab" style="left:1086.5px;top:738.4000000000001px;width:100px;height:1px;background:#d0d7e5"></div>
<div class="ab" style="left:1155px;top:177px;width:1px;height:560px;background:#d0d7e5"></div>
<div class="ab" style="left:26px;top:177.5px;width:1060.5px;height:43px;background:#614b80"></div>
<div class="ab" style="left:98.7px;top:177.5px;width:1.6px;height:560px;background:#151515"></div>
<div class="ab" style="left:301.7px;top:177.5px;width:1.6px;height:560px;background:#151515"></div>
<div class="ab" style="left:504.7px;top:177.5px;width:1.6px;height:560px;background:#151515"></div>
<div class="ab" style="left:707.7px;top:177.5px;width:1.6px;height:560px;background:#151515"></div>
<div class="ab" style="left:930.7px;top:177.5px;width:1.6px;height:560px;background:#151515"></div>
<div class="ab" style="left:1085.7px;top:177.5px;width:1.6px;height:560px;background:#151515"></div>
<div class="ab" style="left:26px;top:241.7px;width:1060.5px;height:1.6px;background:#151515"></div>
<div class="ab" style="left:26px;top:262.7px;width:1060.5px;height:1.6px;background:#151515"></div>
<div class="ab" style="left:26px;top:284.7px;width:1060.5px;height:1.6px;background:#151515"></div>
<div class="ab" style="left:26px;top:305.7px;width:1060.5px;height:1.6px;background:#151515"></div>
<div class="ab" style="left:26px;top:327.7px;width:1060.5px;height:1.6px;background:#151515"></div>
<div class="ab" style="left:26px;top:349.7px;width:1060.5px;height:1.6px;background:#151515"></div>
<div class="ab" style="left:26px;top:370.7px;width:1060.5px;height:1.6px;background:#151515"></div>
<div class="ab" style="left:26px;top:392.7px;width:1060.5px;height:1.6px;background:#151515"></div>
<div class="ab" style="left:26px;top:413.7px;width:1060.5px;height:1.6px;background:#151515"></div>
<div class="ab" style="left:26px;top:435.7px;width:1060.5px;height:1.6px;background:#151515"></div>
<div class="ab" style="left:26px;top:457.7px;width:1060.5px;height:1.6px;background:#151515"></div>
<div class="ab" style="left:26px;top:478.7px;width:1060.5px;height:1.6px;background:#151515"></div>
<div class="ab" style="left:26px;top:500.7px;width:1060.5px;height:1.6px;background:#151515"></div>
<div class="ab" style="left:26px;top:521.7px;width:1060.5px;height:1.6px;background:#151515"></div>
<div class="ab" style="left:26px;top:543.7px;width:1060.5px;height:1.6px;background:#151515"></div>
<div class="ab" style="left:26px;top:565.7px;width:1060.5px;height:1.6px;background:#151515"></div>
<div class="ab" style="left:26px;top:586.7px;width:1060.5px;height:1.6px;background:#151515"></div>
<div class="ab" style="left:26px;top:608.7px;width:1060.5px;height:1.6px;background:#151515"></div>
<div class="ab" style="left:26px;top:629.7px;width:1060.5px;height:1.6px;background:#151515"></div>
<div class="ab" style="left:26px;top:651.7px;width:1060.5px;height:1.6px;background:#151515"></div>
<div class="ab" style="left:26px;top:673.7px;width:1060.5px;height:1.6px;background:#151515"></div>
<div class="ab" style="left:26px;top:694.7px;width:1060.5px;height:1.6px;background:#151515"></div>
<div class="ab" style="left:26px;top:716.7px;width:1060.5px;height:1.6px;background:#151515"></div>
<div class="ab" style="left:26px;top:737.7px;width:1060.5px;height:1.6px;background:#151515"></div>
<div class="ab" style="left:1154.7px;top:220.5px;width:1.6px;height:43.2px;background:#151515"></div>
<div class="ab" style="left:26px;top:177.5px;width:1160px;height:1.5px;background:repeating-linear-gradient(90deg,#1a1a1a 0,#1a1a1a 4px,transparent 4px,transparent 6px)"></div>
<div class="ab" style="left:26px;top:219.5px;width:1160px;height:1.6px;background:repeating-linear-gradient(90deg,#1a1a1a 0,#1a1a1a 4px,#fff 4px,#fff 6px)"></div>
<div class="ab" style="left:26px;top:177.5px;width:1.5px;height:43px;background:repeating-linear-gradient(180deg,#1a1a1a 0,#1a1a1a 4px,#8a7aa0 4px,#8a7aa0 6px)"></div>
<div class="t" style="left:62.5px;top:182.4px;font-size:14px;font-weight:bold;color:#fff;transform:translateX(-50%)">Наимено</div>
<div class="t" style="left:62.5px;top:203.20000000000002px;font-size:14px;font-weight:bold;color:#fff;transform:translateX(-50%)">вание</div>
<div class="t" style="left:200.5px;top:182.4px;font-size:14px;font-weight:bold;color:#fff;transform:translateX(-50%)">Продажи 2012 розничные</div>
<div class="t" style="left:200.5px;top:203.20000000000002px;font-size:14px;font-weight:bold;color:#fff;transform:translateX(-50%)">цены, руб</div>
<div class="t" style="left:403.5px;top:182.4px;font-size:14px;font-weight:bold;color:#fff;transform:translateX(-50%)">Продажи 2013 розничные</div>
<div class="t" style="left:403.5px;top:203.20000000000002px;font-size:14px;font-weight:bold;color:#fff;transform:translateX(-50%)">цены, руб</div>
<div class="t" style="left:606.5px;top:182.4px;font-size:14px;font-weight:bold;color:#fff;transform:translateX(-50%)">Продажи 2014 розничные</div>
<div class="t" style="left:606.5px;top:203.20000000000002px;font-size:14px;font-weight:bold;color:#fff;transform:translateX(-50%)">цены, руб</div>
<div class="t" style="left:819.5px;top:182.4px;font-size:14px;font-weight:bold;color:#fff;transform:translateX(-50%)">Продажи 2015 розничные</div>
<div class="t" style="left:819.5px;top:203.20000000000002px;font-size:14px;font-weight:bold;color:#fff;transform:translateX(-50%)">цены, руб</div>
<div class="t" style="left:1008.7px;top:194.5px;font-size:13.8px;font-weight:bold;color:#fff;transform:translateX(-50%)">Характеристика</div>
<div class="t" style="left:28.8px;top:225.9px;font-size:13.8px;color:#1f1f2a">Товар 1</div>
<div class="t" style="right:886px;top:225.9px;font-size:13.3px;color:#1f1f2a">4 936</div>
<div class="t" style="right:683px;top:225.9px;font-size:13.3px;color:#1f1f2a">5 557</div>
<div class="t" style="right:480px;top:225.9px;font-size:13.3px;color:#1f1f2a">7 479</div>
<div class="t" style="right:257px;top:225.9px;font-size:13.3px;color:#1f1f2a">9 232</div>
<div class="t" style="left:934.5px;top:225.9px;font-size:14.3px;color:#1f1f2a">Товарная группа 1</div>
<div class="t" style="left:28.8px;top:247.5px;font-size:13.8px;color:#1f1f2a">Товар 2</div>
<div class="t" style="right:886px;top:247.5px;font-size:13.3px;color:#1f1f2a">277 379</div>
<div class="t" style="right:683px;top:247.5px;font-size:13.3px;color:#1f1f2a">312 273</div>
<div class="t" style="right:480px;top:247.5px;font-size:13.3px;color:#1f1f2a">420 285</div>
<div class="t" style="right:257px;top:247.5px;font-size:13.3px;color:#1f1f2a">518 842</div>
<div class="t" style="left:934.5px;top:247.5px;font-size:14.3px;color:#1f1f2a">Товарная группа 3</div>
<div class="t" style="left:28.8px;top:269.1px;font-size:13.8px;color:#1f1f2a">Товар 3</div>
<div class="t" style="right:886px;top:269.1px;font-size:13.3px;color:#1f1f2a">277 379</div>
<div class="t" style="left:934.5px;top:269.1px;font-size:14.3px;color:#1f1f2a">Товарная группа 3</div>
<div class="t" style="left:28.8px;top:290.7px;font-size:13.8px;color:#1f1f2a">Товар 4</div>
<div class="t" style="right:886px;top:290.7px;font-size:13.3px;color:#1f1f2a">324 874</div>
<div class="t" style="left:934.5px;top:290.7px;font-size:14.3px;color:#1f1f2a">Товарная группа 4</div>
<div class="t" style="left:28.8px;top:312.3px;font-size:13.8px;color:#1f1f2a">Товар 5</div>
<div class="t" style="right:886px;top:312.3px;font-size:13.3px;color:#1f1f2a">350 864</div>
<div class="t" style="left:934.5px;top:312.3px;font-size:14.3px;color:#1f1f2a">Товарная группа 4</div>
<div class="t" style="left:28.8px;top:333.90000000000003px;font-size:13.8px;color:#1f1f2a">Товар 6</div>
<div class="t" style="right:886px;top:333.90000000000003px;font-size:13.3px;color:#1f1f2a">185 577</div>
<div class="t" style="left:934.5px;top:333.90000000000003px;font-size:14.3px;color:#1f1f2a">Товарная группа 3</div>
<div class="t" style="left:28.8px;top:355.50000000000006px;font-size:13.8px;color:#1f1f2a">Товар 7</div>
<div class="t" style="right:886px;top:355.50000000000006px;font-size:13.3px;color:#1f1f2a">440 118</div>
<div class="t" style="left:934.5px;top:355.50000000000006px;font-size:14.3px;color:#1f1f2a">Товарная группа 5</div>
<div class="t" style="left:28.8px;top:377.1px;font-size:13.8px;color:#1f1f2a">Товар 8</div>
<div class="t" style="right:886px;top:377.1px;font-size:13.3px;color:#1f1f2a">488 389</div>
<div class="t" style="left:934.5px;top:377.1px;font-size:14.3px;color:#1f1f2a">Товарная группа 5</div>
<div class="t" style="left:28.8px;top:398.7px;font-size:13.8px;color:#1f1f2a">Товар 9</div>
<div class="t" style="right:886px;top:398.7px;font-size:13.3px;color:#1f1f2a">51 150</div>
<div class="t" style="left:934.5px;top:398.7px;font-size:14.3px;color:#1f1f2a">Товарная группа 1</div>
<div class="t" style="left:28.8px;top:420.3px;font-size:13.8px;color:#1f1f2a">Товар 10</div>
<div class="t" style="right:886px;top:420.3px;font-size:13.3px;color:#1f1f2a">127 828</div>
<div class="t" style="left:934.5px;top:420.3px;font-size:14.3px;color:#1f1f2a">Товарная группа 2</div>
<div class="t" style="left:28.8px;top:441.90000000000003px;font-size:13.8px;color:#1f1f2a">Товар 11</div>
<div class="t" style="right:886px;top:441.90000000000003px;font-size:13.3px;color:#1f1f2a">237 022</div>
<div class="t" style="left:934.5px;top:441.90000000000003px;font-size:14.3px;color:#1f1f2a">Товарная группа 3</div>
<div class="t" style="left:28.8px;top:463.50000000000006px;font-size:13.8px;color:#1f1f2a">Товар 12</div>
<div class="t" style="right:886px;top:463.50000000000006px;font-size:13.3px;color:#1f1f2a">159 037</div>
<div class="t" style="left:934.5px;top:463.50000000000006px;font-size:14.3px;color:#1f1f2a">Товарная группа 2</div>
<div class="t" style="left:28.8px;top:485.1px;font-size:13.8px;color:#1f1f2a">Товар 13</div>
<div class="t" style="right:886px;top:485.1px;font-size:13.3px;color:#1f1f2a">139 621</div>
<div class="t" style="left:934.5px;top:485.1px;font-size:14.3px;color:#1f1f2a">Товарная группа 2</div>
<div class="t" style="left:28.8px;top:506.7000000000001px;font-size:13.8px;color:#1f1f2a">Товар 14</div>
<div class="t" style="right:886px;top:506.7000000000001px;font-size:13.3px;color:#1f1f2a">286 707</div>
<div class="t" style="left:934.5px;top:506.7000000000001px;font-size:14.3px;color:#1f1f2a">Товарная группа 3</div>
<div class="t" style="left:28.8px;top:528.3px;font-size:13.8px;color:#1f1f2a">Товар 15</div>
<div class="t" style="right:886px;top:528.3px;font-size:13.3px;color:#1f1f2a">156 303</div>
<div class="t" style="left:934.5px;top:528.3px;font-size:14.3px;color:#1f1f2a">Товарная группа 2</div>
<div class="t" style="left:28.8px;top:549.9px;font-size:13.8px;color:#1f1f2a">Товар 16</div>
<div class="t" style="right:886px;top:549.9px;font-size:13.3px;color:#1f1f2a">528 038</div>
<div class="t" style="left:934.5px;top:549.9px;font-size:14.3px;color:#1f1f2a">Товарная группа 5</div>
<div class="t" style="left:28.8px;top:571.5px;font-size:13.8px;color:#1f1f2a">Товар 17</div>
<div class="t" style="right:886px;top:571.5px;font-size:13.3px;color:#1f1f2a">3 501</div>
<div class="t" style="left:934.5px;top:571.5px;font-size:14.3px;color:#1f1f2a">Товарная группа 1</div>
<div class="t" style="left:28.8px;top:593.0999999999999px;font-size:13.8px;color:#1f1f2a">Товар 18</div>
<div class="t" style="right:886px;top:593.0999999999999px;font-size:13.3px;color:#1f1f2a">78 767</div>
<div class="t" style="left:934.5px;top:593.0999999999999px;font-size:14.3px;color:#1f1f2a">Товарная группа 2</div>
<div class="t" style="left:28.8px;top:614.7px;font-size:13.8px;color:#1f1f2a">Товар 19</div>
<div class="t" style="right:886px;top:614.7px;font-size:13.3px;color:#1f1f2a">486 905</div>
<div class="t" style="left:934.5px;top:614.7px;font-size:14.3px;color:#1f1f2a">Товарная группа 5</div>
<div class="t" style="left:28.8px;top:636.3px;font-size:13.8px;color:#1f1f2a">Товар 20</div>
<div class="t" style="right:886px;top:636.3px;font-size:13.3px;color:#1f1f2a">379 495</div>
<div class="t" style="left:934.5px;top:636.3px;font-size:14.3px;color:#1f1f2a">Товарная группа 4</div>
<div class="t" style="left:28.8px;top:657.9px;font-size:13.8px;color:#1f1f2a">Товар 21</div>
<div class="t" style="right:886px;top:657.9px;font-size:13.3px;color:#1f1f2a">270 828</div>
<div class="t" style="left:934.5px;top:657.9px;font-size:14.3px;color:#1f1f2a">Товарная группа 3</div>
<div class="t" style="left:28.8px;top:679.5px;font-size:13.8px;color:#1f1f2a">Товар 22</div>
<div class="t" style="right:886px;top:679.5px;font-size:13.3px;color:#1f1f2a">35 686</div>
<div class="t" style="left:934.5px;top:679.5px;font-size:14.3px;color:#1f1f2a">Товарная группа 1</div>
<div class="t" style="left:28.8px;top:701.0999999999999px;font-size:13.8px;color:#1f1f2a">Товар 23</div>
<div class="t" style="right:886px;top:701.0999999999999px;font-size:13.3px;color:#1f1f2a">180 521</div>
<div class="t" style="left:934.5px;top:701.0999999999999px;font-size:14.3px;color:#1f1f2a">Товарная группа 3</div>
<div class="t" style="left:28.8px;top:722.7px;font-size:13.8px;color:#1f1f2a">Товар 24</div>
<div class="t" style="right:886px;top:722.7px;font-size:13.3px;color:#1f1f2a">216 925</div>
<div class="t" style="left:934.5px;top:722.7px;font-size:14.3px;color:#1f1f2a">Товарная группа 3</div>
<div class="ab" style="left:0;top:732.5px;width:1186px;height:26px;background:#fff"></div>
<div class="ab" style="left:0;top:732.5px;width:1183px;height:15.5px;background:linear-gradient(#d9e6f6,#c3d6ee)"></div>
<div class="ab" style="left:255px;top:732.5px;width:928px;height:15.5px;background:linear-gradient(#b4c9e4,#9ab4d8 60%,#8eaad2)"></div>
<div class="ab" style="left:896px;top:733px;width:287px;height:14.5px;background:linear-gradient(#eef3fa,#d3deed 50%,#b9c9de);border:1px solid #94abc9;border-right:none;border-radius:2px 0 0 2px"></div>
<div class="ab" style="left:872px;top:733px;width:23px;height:14.5px;background:linear-gradient(#c8d7ea,#a9bfdc)"></div>
<div class="ab" style="left:1110px;top:736.5px;width:8px;height:7px;background:repeating-linear-gradient(90deg,#7f93ad 0,#7f93ad 1px,#f2f6fb 1px,#f2f6fb 2px)"></div>
<div class="ab" style="left:0;top:747.5px;width:1183px;height:1.5px;background:#5f7594"></div>
<div class="ab" style="left:0;top:749px;width:1183px;height:8px;background:linear-gradient(#d7e5f7,#c8dbf3)"></div>
<div class="ab" style="left:62px;top:749px;width:1px;height:8px;background:#aec3de"></div>
<div class="ab" style="left:100px;top:749px;width:1px;height:8px;background:#aec3de"></div>
<div class="ab" style="left:75px;top:750px;width:14px;height:6px;background:#5a86c8;border-left:3px solid #e04a3a"></div>
<svg class="ab" style="left:0;top:732px" width="280" height="17" viewBox="0 0 280 17"><path d="M223 16L235 1H267L255 16Z" fill="#cfdcee" stroke="#8ea6c8" stroke-width="0.8"/><path d="M168 16L180 1H230L218 16Z" fill="url(#tg)" stroke="#8ea6c8" stroke-width="0.8"/><path d="M113 16L125 1H176L164 16Z" fill="url(#tg)" stroke="#8ea6c8" stroke-width="0.8"/><defs><linearGradient id="tg" x1="0" y1="0" x2="0" y2="1"><stop offset="0" stop-color="#e7eef8"/><stop offset="1" stop-color="#c5d5ea"/></linearGradient><linearGradient id="ta" x1="0" y1="0" x2="0" y2="1"><stop offset="0" stop-color="#fafcfe"/><stop offset="1" stop-color="#e6eef8"/></linearGradient></defs><path d="M61.5 0.5V16H111L124 1V0.5Z" fill="url(#ta)" stroke="#a6b9d3" stroke-width="0.8"/><g fill="#1f3e6d"><rect x="3.3" y="4" width="1.6" height="8"/><path d="M10 4V12L5 8Z"/><path d="M24 4V12L19 8Z"/><path d="M34 4V12L39 8Z"/><path d="M48 4V12L53 8Z"/><rect x="53.5" y="4" width="1.6" height="8"/></g><path d="M239 6H249V12H243L239 14Z" fill="#eef3fa" stroke="#4d6b99" stroke-width="0.9"/><circle cx="238" cy="4.5" r="2.2" fill="#f6d55a"/></svg>
<div class="t" style="left:72px;top:735px;font-size:12.6px;font-weight:bold;color:#1e3d6b">Лист1</div>
<div class="t" style="left:127.8px;top:735.5px;font-size:12px;color:#3b5273">Лист2</div>
<div class="t" style="left:181px;top:735.5px;font-size:12px;color:#3b5273">Лист3</div>
<div class="ab" style="left:415px;top:260px;width:541px;height:481px;background:#d4d0c8;border-top:1px solid #e8e6e1;border-left:1px solid #e8e6e1;border-right:1px solid #404040;border-bottom:1px solid #404040"></div>
<div class="ab" style="left:416px;top:261px;width:539px;height:479px;border-top:1px solid #fff;border-left:1px solid #fff;border-right:1px solid #808080;border-bottom:1px solid #808080"></div>
<div class="ab" style="left:418px;top:263px;width:535px;height:19px;background:linear-gradient(90deg,#0a246a,#a6caf0)"></div>
<div class="t" style="left:420px;top:267px;font-size:12.5px;font-weight:bold;color:#fff">Параметры страницы</div>
<div class="ab" style="left:914px;top:265px;width:17px;height:15.5px;background:#d4d0c8;border-top:1px solid #fff;border-left:1px solid #fff;border-right:1px solid #404040;border-bottom:1px solid #404040;box-shadow:inset -1px -1px 0 #808080"></div>
<div class="ab" style="left:933.7px;top:265px;width:17px;height:15.5px;background:#d4d0c8;border-top:1px solid #fff;border-left:1px solid #fff;border-right:1px solid #404040;border-bottom:1px solid #404040;box-shadow:inset -1px -1px 0 #808080"></div>
<div class="t" style="left:919px;top:266.5px;font-size:12px;font-weight:bold;color:#000">?</div>
<svg class="ab" style="left:937px;top:268px" width="10" height="9"><path d="M1 1L8 8M8 1L1 8" stroke="#000" stroke-width="1.8"/></svg>
<div class="ab" style="left:425.3px;top:314px;width:521px;height:383px;border-top:1px solid #fff;border-left:1px solid #fff;border-right:1px solid #404040;border-bottom:1px solid #404040;box-shadow:inset -1px -1px 0 #808080"></div>
<div class="ab" style="left:426.3px;top:294px;width:69.69999999999999px;height:20px;background:#d4d0c8;border-top:1px solid #fff;border-left:1px solid #fff;border-right:1px solid #404040;border-radius:2px 2px 0 0;box-shadow:inset -1px 0 0 #808080"></div>
<div class="t" style="left:434px;top:300.3px;font-size:12px;color:#000">Страница</div>
<div class="ab" style="left:497px;top:294px;width:57.5px;height:20px;background:#d4d0c8;border-top:1px solid #fff;border-left:1px solid #fff;border-right:1px solid #404040;border-radius:2px 2px 0 0;box-shadow:inset -1px 0 0 #808080"></div>
<div class="t" style="left:511px;top:300.3px;font-size:12px;color:#000">Поля</div>
<div class="ab" style="left:555.3px;top:294px;width:92.70000000000005px;height:20px;background:#d4d0c8;border-top:1px solid #fff;border-left:1px solid #fff;border-right:1px solid #404040;border-radius:2px 2px 0 0;box-shadow:inset -1px 0 0 #808080"></div>
<div class="t" style="left:564px;top:300.3px;font-size:12px;color:#000">Колонтитулы</div>
<div class="ab" style="left:649px;top:291.3px;width:59.39999999999998px;height:23.69999999999999px;background:#d4d0c8;border-top:1px solid #fff;border-left:1px solid #fff;border-right:1px solid #404040;border-radius:2px 2px 0 0;box-shadow:inset -1px 0 0 #808080"></div>
<div class="t" style="left:664px;top:297.8px;font-size:12px;color:#000">Лист</div>
<div class="t" style="left:434px;top:329.59999999999997px;font-size:12px;color:#000">Выводить на печать <u>д</u>иапазон:</div>
<div class="ab" style="left:617.3px;top:325.4px;width:318.70000000000005px;height:19.900000000000034px;background:#fff;border-top:1px solid #808080;border-left:1px solid #808080;border-right:1px solid #fff;border-bottom:1px solid #fff;box-shadow:inset 1px 1px 0 #404040"></div>
<svg class="ab" style="left:916.5px;top:327.4px" width="18" height="17" viewBox="0 0 18 17"><rect x="0.5" y="0.5" width="17" height="16" fill="#fff" stroke="#fff"/><rect x="1" y="1" width="16" height="15" fill="#e8eef8" stroke="#5a6f8f"/><rect x="1" y="1" width="16" height="3" fill="#4b6aa6"/><path d="M1 7.5H17M1 11H17M6 4V16M11 4V16" stroke="#8fa3c3" stroke-width="0.8"/><path d="M7 5L13 10L11 10.5L13 14L11.5 14.7L9.8 11.3L8 13Z" fill="#e43b2a" stroke="#a02018" stroke-width="0.6"/><path d="M0 16.5H17.5V0" stroke="#404040" fill="none"/></svg>
<div class="t" style="left:434px;top:351.7px;font-size:12px;color:#000">Печатать на каждой странице</div>
<div class="ab" style="left:608.5px;top:356px;width:328px;height:2px;border-top:1px solid #808080;border-bottom:1px solid #fff"></div>
<div class="t" style="left:444px;top:377.0px;font-size:12px;color:#000">сквозные ст<u>р</u>оки:</div>
<div class="ab" style="left:560.4px;top:372px;width:375.6px;height:19.80000000000001px;background:#fff;border-top:1px solid #808080;border-left:1px solid #808080;border-right:1px solid #fff;border-bottom:1px solid #fff;box-shadow:inset 1px 1px 0 #404040"></div>
<div class="t" style="left:563.4px;top:376.5px;font-size:12px;color:#000">$1:$1</div>
<svg class="ab" style="left:916.5px;top:374px" width="18" height="17" viewBox="0 0 18 17"><rect x="0.5" y="0.5" width="17" height="16" fill="#fff" stroke="#fff"/><rect x="1" y="1" width="16" height="15" fill="#e8eef8" stroke="#5a6f8f"/><rect x="1" y="1" width="16" height="3" fill="#4b6aa6"/><path d="M1 7.5H17M1 11H17M6 4V16M11 4V16" stroke="#8fa3c3" stroke-width="0.8"/><path d="M7 5L13 10L11 10.5L13 14L11.5 14.7L9.8 11.3L8 13Z" fill="#e43b2a" stroke="#a02018" stroke-width="0.6"/><path d="M0 16.5H17.5V0" stroke="#404040" fill="none"/></svg>
<div class="t" style="left:444px;top:401.0px;font-size:12px;color:#000">сквозные ст<u>о</u>лбцы:</div>
<div class="ab" style="left:560.4px;top:397px;width:375.6px;height:19.80000000000001px;background:#fff;border-top:1px solid #808080;border-left:1px solid #808080;border-right:1px solid #fff;border-bottom:1px solid #fff;box-shadow:inset 1px 1px 0 #404040"></div>
<svg class="ab" style="left:916.5px;top:399px" width="18" height="17" viewBox="0 0 18 17"><rect x="0.5" y="0.5" width="17" height="16" fill="#fff" stroke="#fff"/><rect x="1" y="1" width="16" height="15" fill="#e8eef8" stroke="#5a6f8f"/><rect x="1" y="1" width="16" height="3" fill="#4b6aa6"/><path d="M1 7.5H17M1 11H17M6 4V16M11 4V16" stroke="#8fa3c3" stroke-width="0.8"/><path d="M7 5L13 10L11 10.5L13 14L11.5 14.7L9.8 11.3L8 13Z" fill="#e43b2a" stroke="#a02018" stroke-width="0.6"/><path d="M0 16.5H17.5V0" stroke="#404040" fill="none"/></svg>
<div class="t" style="left:434px;top:428.49999999999994px;font-size:12px;color:#000">Печать</div>
<div class="ab" style="left:479.5px;top:432px;width:457px;height:2px;border-top:1px solid #808080;border-bottom:1px solid #fff"></div>
<div class="ab" style="left:444.3px;top:449.3px;width:13.5px;height:13.5px;background:#fff;border-top:1px solid #808080;border-left:1px solid #808080;border-right:1px solid #fff;border-bottom:1px solid #fff;box-shadow:inset 1px 1px 0 #404040,inset -1px -1px 0 #d4d0c8"></div>
<div class="t" style="left:462px;top:451.29999999999995px;font-size:12px;color:#000">сет<u>к</u>а</div>
<div class="ab" style="left:444.3px;top:470.4px;width:13.5px;height:13.5px;background:#fff;border-top:1px solid #808080;border-left:1px solid #808080;border-right:1px solid #fff;border-bottom:1px solid #fff;box-shadow:inset 1px 1px 0 #404040,inset -1px -1px 0 #d4d0c8"></div>
<div class="t" style="left:462px;top:472.4px;font-size:12px;color:#000">черно-<u>б</u>елая</div>
<div class="ab" style="left:444.3px;top:490.6px;width:13.5px;height:13.5px;background:#fff;border-top:1px solid #808080;border-left:1px solid #808080;border-right:1px solid #fff;border-bottom:1px solid #fff;box-shadow:inset 1px 1px 0 #404040,inset -1px -1px 0 #d4d0c8"></div>
<div class="t" style="left:462px;top:492.7px;font-size:12px;color:#000">чернова<u>я</u></div>
<div class="ab" style="left:444.3px;top:511.2px;width:13.5px;height:13.5px;background:#fff;border-top:1px solid #808080;border-left:1px solid #808080;border-right:1px solid #fff;border-bottom:1px solid #fff;box-shadow:inset 1px 1px 0 #404040,inset -1px -1px 0 #d4d0c8"></div>
<div class="t" style="left:462px;top:512.9px;font-size:12px;color:#000"><u>з</u>аголовки строк и столбцов</div>
<div class="t" style="left:660.1px;top:455.09999999999997px;font-size:12px;color:#000">приме<u>ч</u>ания:</div>
<div class="t" style="left:660.1px;top:480.4px;font-size:12px;color:#000">о<u>ш</u>ибки ячеек как:</div>
<div class="ab" style="left:774px;top:448.9px;width:162px;height:21.5px;background:#fff;border-top:1px solid #808080;border-left:1px solid #808080;border-right:1px solid #fff;border-bottom:1px solid #fff;box-shadow:inset 1px 1px 0 #404040"></div>
<div class="t" style="left:777px;top:454.7px;font-size:12px;color:#000">(нет)</div>
<div class="ab" style="left:917px;top:450.9px;width:17px;height:17.5px;background:#d4d0c8;border-top:1px solid #fff;border-left:1px solid #fff;border-right:1px solid #404040;border-bottom:1px solid #404040;box-shadow:inset -1px -1px 0 #808080"></div>
<div class="ab" style="left:922px;top:457.9px;width:0;height:0;border-left:4px solid transparent;border-right:4px solid transparent;border-top:4px solid #000"></div>
<div class="ab" style="left:774px;top:475.4px;width:162px;height:21.5px;background:#fff;border-top:1px solid #808080;border-left:1px solid #808080;border-right:1px solid #fff;border-bottom:1px solid #fff;box-shadow:inset 1px 1px 0 #404040"></div>
<div class="t" style="left:777px;top:481.2px;font-size:12px;color:#000">на экране</div>
<div class="ab" style="left:917px;top:477.4px;width:17px;height:17.5px;background:#d4d0c8;border-top:1px solid #fff;border-left:1px solid #fff;border-right:1px solid #404040;border-bottom:1px solid #404040;box-shadow:inset -1px -1px 0 #808080"></div>
<div class="ab" style="left:922px;top:484.4px;width:0;height:0;border-left:4px solid transparent;border-right:4px solid transparent;border-top:4px solid #000"></div>
<div class="t" style="left:434.2px;top:538.0px;font-size:12px;color:#000">Последовательность вывода страниц</div>
<div class="ab" style="left:649px;top:542px;width:287px;height:2px;border-top:1px solid #808080;border-bottom:1px solid #fff"></div>
<svg class="ab" style="left:445px;top:559.0px" width="12" height="12" viewBox="0 0 12 12"><circle cx="6" cy="6" r="5.5" fill="#fff"/><path d="M1.8 9.8A5.5 5.5 0 0 1 9.8 1.8" stroke="#808080" fill="none"/><path d="M2.6 9A4.5 4.5 0 0 1 9 2.6" stroke="#404040" fill="none"/><path d="M10.2 2.2A5.5 5.5 0 0 1 2.2 10.2" stroke="#fff" fill="none"/><circle cx="6" cy="6" r="2" fill="#000"/></svg>
<div class="t" style="left:461.6px;top:561.1px;font-size:12px;color:#000">в<u>н</u>из, затем вправо</div>
<svg class="ab" style="left:445px;top:579.0px" width="12" height="12" viewBox="0 0 12 12"><circle cx="6" cy="6" r="5.5" fill="#fff"/><path d="M1.8 9.8A5.5 5.5 0 0 1 9.8 1.8" stroke="#808080" fill="none"/><path d="M2.6 9A4.5 4.5 0 0 1 9 2.6" stroke="#404040" fill="none"/><path d="M10.2 2.2A5.5 5.5 0 0 1 2.2 10.2" stroke="#fff" fill="none"/></svg>
<div class="t" style="left:461.6px;top:581.1px;font-size:12px;color:#000"><u>в</u>право, затем вниз</div>
<svg class="ab" style="left:581.7px;top:557.3px" width="80" height="52" viewBox="0 0 80 52"><rect x="0.5" y="0.5" width="79" height="51" fill="#fff" stroke="#111"/><rect x="4.1" y="4.9" width="32" height="18.4" fill="#fff" stroke="#9a9a9a" stroke-width="1"/><rect x="4.6" y="5.4" width="31" height="4.5" fill="#f3f3f3"/><rect x="7.1" y="7.1000000000000005" width="4.5" height="1.8" fill="#111"/><rect x="15.766666666666666" y="7.1000000000000005" width="4.5" height="1.8" fill="#111"/><rect x="24.43333333333333" y="7.1000000000000005" width="4.5" height="1.8" fill="#111"/><path d="M12.6 9.9V23.299999999999997M20.6 9.9V23.299999999999997" stroke="#b5b5b5" stroke-width="0.8"/><rect x="7.1" y="12.4" width="4" height="1.5" fill="#333"/><rect x="16.1" y="12.4" width="4" height="1.5" fill="#333"/><rect x="25.1" y="12.4" width="4" height="1.5" fill="#333"/><rect x="7.1" y="15.7" width="4" height="1.5" fill="#333"/><rect x="16.1" y="15.7" width="4" height="1.5" fill="#333"/><rect x="25.1" y="15.7" width="4" height="1.5" fill="#333"/><rect x="7.1" y="19.0" width="4" height="1.5" fill="#333"/><rect x="16.1" y="19.0" width="4" height="1.5" fill="#333"/><rect x="25.1" y="19.0" width="4" height="1.5" fill="#333"/><rect x="40.9" y="4.9" width="32" height="18.4" fill="#fff" stroke="#9a9a9a" stroke-width="1"/><rect x="41.4" y="5.4" width="31" height="4.5" fill="#f3f3f3"/><rect x="43.9" y="7.1000000000000005" width="3.5" height="1.8" fill="#111"/><rect x="50.4" y="7.1000000000000005" width="3.5" height="1.8" fill="#111"/><rect x="56.9" y="7.1000000000000005" width="3.5" height="1.8" fill="#111"/><rect x="63.4" y="7.1000000000000005" width="3.5" height="1.8" fill="#111"/><path d="M49.4 9.9V23.299999999999997M57.4 9.9V23.299999999999997" stroke="#b5b5b5" stroke-width="0.8"/><rect x="43.9" y="12.4" width="4" height="1.5" fill="#333"/><rect x="52.9" y="12.4" width="4" height="1.5" fill="#333"/><rect x="61.9" y="12.4" width="4" height="1.5" fill="#333"/><rect x="43.9" y="15.7" width="4" height="1.5" fill="#333"/><rect x="52.9" y="15.7" width="4" height="1.5" fill="#333"/><rect x="61.9" y="15.7" width="4" height="1.5" fill="#333"/><rect x="43.9" y="19.0" width="4" height="1.5" fill="#333"/><rect x="52.9" y="19.0" width="4" height="1.5" fill="#333"/><rect x="61.9" y="19.0" width="4" height="1.5" fill="#333"/><rect x="4.1" y="27.8" width="32" height="18.4" fill="#fff" stroke="#9a9a9a" stroke-width="1"/><rect x="4.6" y="28.3" width="31" height="4.5" fill="#f3f3f3"/><rect x="7.1" y="30.0" width="4.5" height="1.8" fill="#111"/><rect x="15.766666666666666" y="30.0" width="4.5" height="1.8" fill="#111"/><rect x="24.43333333333333" y="30.0" width="4.5" height="1.8" fill="#111"/><path d="M12.6 32.8V46.2M20.6 32.8V46.2" stroke="#b5b5b5" stroke-width="0.8"/><rect x="7.1" y="35.3" width="4" height="1.5" fill="#333"/><rect x="16.1" y="35.3" width="4" height="1.5" fill="#333"/><rect x="25.1" y="35.3" width="4" height="1.5" fill="#333"/><rect x="7.1" y="38.599999999999994" width="4" height="1.5" fill="#333"/><rect x="16.1" y="38.599999999999994" width="4" height="1.5" fill="#333"/><rect x="25.1" y="38.599999999999994" width="4" height="1.5" fill="#333"/><rect x="7.1" y="41.9" width="4" height="1.5" fill="#333"/><rect x="16.1" y="41.9" width="4" height="1.5" fill="#333"/><rect x="25.1" y="41.9" width="4" height="1.5" fill="#333"/><rect x="40.9" y="27.8" width="32" height="18.4" fill="#fff" stroke="#9a9a9a" stroke-width="1"/><rect x="41.4" y="28.3" width="31" height="4.5" fill="#f3f3f3"/><rect x="43.9" y="30.0" width="3.5" height="1.8" fill="#111"/><rect x="50.4" y="30.0" width="3.5" height="1.8" fill="#111"/><rect x="56.9" y="30.0" width="3.5" height="1.8" fill="#111"/><rect x="63.4" y="30.0" width="3.5" height="1.8" fill="#111"/><path d="M49.4 32.8V46.2M57.4 32.8V46.2" stroke="#b5b5b5" stroke-width="0.8"/><rect x="43.9" y="35.3" width="4" height="1.5" fill="#333"/><rect x="52.9" y="35.3" width="4" height="1.5" fill="#333"/><rect x="61.9" y="35.3" width="4" height="1.5" fill="#333"/><rect x="43.9" y="38.599999999999994" width="4" height="1.5" fill="#333"/><rect x="52.9" y="38.599999999999994" width="4" height="1.5" fill="#333"/><rect x="61.9" y="38.599999999999994" width="4" height="1.5" fill="#333"/><rect x="43.9" y="41.9" width="4" height="1.5" fill="#333"/><rect x="52.9" y="41.9" width="4" height="1.5" fill="#333"/><rect x="61.9" y="41.9" width="4" height="1.5" fill="#333"/><path d="M24 6V46.3" stroke="#12857f" stroke-width="5.3"/><path d="M22.3 11V46.3" stroke="#000" stroke-width="2"/><path d="M25 44L58.5 8" stroke="#12857f" stroke-width="3.6"/><path d="M55 6V41" stroke="#12857f" stroke-width="6"/><path d="M53 12V40" stroke="#000" stroke-width="2"/><path d="M47.5 38.5H62.5L55 46.5Z" fill="#12857f"/><path d="M48.5 40L54.3 46.5" stroke="#000" stroke-width="2"/></svg>
<div class="ab" style="left:671.4px;top:662.1px;width:80.20000000000005px;height:23.799999999999955px;background:#d4d0c8;border-top:1px solid #fff;border-left:1px solid #fff;border-right:1px solid #404040;border-bottom:1px solid #404040;box-shadow:inset -1px -1px 0 #808080"></div>
<div class="t" style="left:711.5px;top:667.5px;font-size:12px;color:#000;transform:translateX(-50%)"><u>П</u>ечать...</div>
<div class="ab" style="left:761.7px;top:662.1px;width:80.89999999999998px;height:23.799999999999955px;background:#d4d0c8;border-top:1px solid #fff;border-left:1px solid #fff;border-right:1px solid #404040;border-bottom:1px solid #404040;box-shadow:inset -1px -1px 0 #808080"></div>
<div class="t" style="left:802.1500000000001px;top:667.5px;font-size:12px;color:#000;transform:translateX(-50%)">Прос<u>м</u>отр</div>
<div class="ab" style="left:852.3px;top:662.1px;width:83.90000000000009px;height:23.799999999999955px;background:#d4d0c8;border-top:1px solid #fff;border-left:1px solid #fff;border-right:1px solid #404040;border-bottom:1px solid #404040;box-shadow:inset -1px -1px 0 #808080"></div>
<div class="t" style="left:894.25px;top:667.5px;font-size:12px;color:#000;transform:translateX(-50%)">Сво<u>й</u>ства...</div>
<div class="ab" style="left:775.1px;top:706.2px;width:80.19999999999993px;height:24.199999999999932px;background:#d4d0c8;border:1px solid #000"></div>
<div class="ab" style="left:776.1px;top:707.2px;width:78.19999999999993px;height:22.199999999999932px;border-top:1px solid #fff;border-left:1px solid #fff;border-right:1px solid #404040;border-bottom:1px solid #404040;box-shadow:inset -1px -1px 0 #808080"></div>
<div class="t" style="left:815.2px;top:711.8px;font-size:12px;color:#000;transform:translateX(-50%)">OK</div>
<div class="ab" style="left:865px;top:706.2px;width:80.89999999999998px;height:24.199999999999932px;background:#d4d0c8;border-top:1px solid #fff;border-left:1px solid #fff;border-right:1px solid #404040;border-bottom:1px solid #404040;box-shadow:inset -1px -1px 0 #808080"></div>
<div class="t" style="left:905.45px;top:711.8px;font-size:12px;color:#000;transform:translateX(-50%)">Отмена</div>
</body></html>
